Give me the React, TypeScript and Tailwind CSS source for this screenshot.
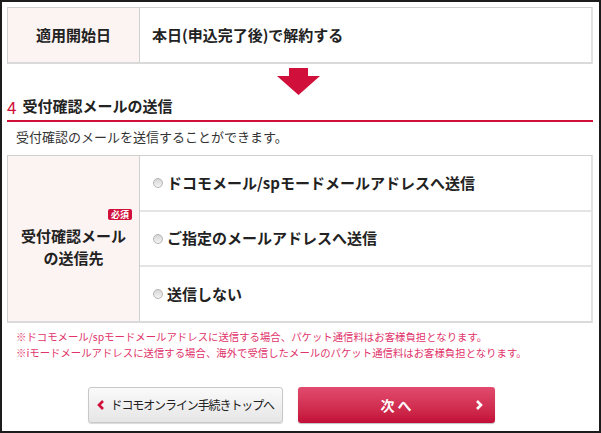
const font = "font-['Meiryo','Noto_Sans_CJK_JP',sans-serif]"

function Radio() {
  return (
    <span className="inline-block w-[10px] h-[10px] rounded-full border border-[#b5b5b5] bg-gradient-to-b from-[#d6d6d6] to-[#f4f4f4] mr-[4px] shrink-0" />
  )
}

const options = [
  'ドコモメール/spモードメールアドレスへ送信',
  'ご指定のメールアドレスへ送信',
  '送信しない',
]

export default function App() {
  return (
    <div className={`w-[601px] h-[433px] border-2 border-[#1c1c1c] bg-white pl-[5px] pr-[6px] pt-[5px] overflow-hidden text-[#222] ${font}`}>
      {/* 適用開始日 */}
      <div className="flex h-[57px] border border-[#d0d0d0] border-r-2 border-b-2 border-r-[#e2e2e2] border-b-[#dadada]">
        <div className="w-[132px] shrink-0 bg-[#fcf4f2] border-r border-[#d0d0d0] flex items-center justify-center text-[15px] font-bold">
          適用開始日
        </div>
        <div className="flex items-center pl-[12px] text-[15px] font-bold">本日(申込完了後)で解約する</div>
      </div>

      {/* arrow */}
      <div className="flex justify-center pt-[4px] h-[31px]">
        <svg width="44" height="27" viewBox="0 0 44 27" className="-translate-x-[1px]">
          <polygon points="12,0 31,0 31,8 43,8 21.5,27 0,8 12,8" fill="#d0103a" />
        </svg>
      </div>

      {/* heading */}
      <div className="flex items-center h-[22px] border-b-2 border-[#d0103a] pb-[3px] box-content">
        <span className="text-[#d0103a] text-[17px] leading-none mr-[6px]">4</span>
        <span className="text-[15px] font-bold">受付確認メールの送信</span>
      </div>

      <p className="text-[13px] text-[#333] pl-[9px] mt-[6px] leading-[18px]">受付確認のメールを送信することができます。</p>

      {/* 受付確認メールの送信先 */}
      <div className="flex mt-[9px] h-[168px] border border-[#d0d0d0] border-r-2 border-b-2 border-r-[#e2e2e2] border-b-[#dadada]">
        <div className="w-[132px] shrink-0 bg-[#fcf4f2] border-r border-[#d0d0d0] flex flex-col items-center justify-center">
          <span className="self-end mr-[7px] bg-[#d0103a] text-white text-[9px] font-bold leading-[11px] px-[3px] rounded-[2px]">必須</span>
          <div className="text-[15px] font-bold leading-[22px] text-center mt-[5px]">
            <p>受付確認メール</p>
            <p>の送信先</p>
          </div>
        </div>
        <div className="flex-1 flex flex-col">
          {options.map((o, i) => (
            <div
              key={o}
              className={`flex-1 flex items-center pl-[13px] text-[15px] font-bold ${i > 0 ? 'border-t-2 border-[#e4e4e4]' : ''}`}
            >
              <Radio />
              {o}
            </div>
          ))}
        </div>
      </div>

      {/* notes */}
      <div className="pl-[9px] mt-[6px] text-[10.4px] leading-[16px] text-[#e0336a]">
        <p>※ドコモメール/spモードメールアドレスに送信する場合、パケット通信料はお客様負担となります。</p>
        <p>※iモードメールアドレスに送信する場合、海外で受信したメールのパケット通信料はお客様負担となります。</p>
      </div>

      {/* buttons */}
      <div className="flex justify-center gap-[15px] mt-[26px] pr-[18px]">
        <button className="w-[195px] h-[36px] rounded-[3px] border border-[#c8c8c8] bg-gradient-to-b from-[#fafafa] to-[#e6e6e6] shadow-[0_1px_1px_rgba(0,0,0,0.15)] flex items-center pl-[8px] text-[12px] tracking-[-1.1px] whitespace-nowrap text-[#222]">
          <svg width="8" height="10" viewBox="0 0 8 10" className="mr-[6px] shrink-0">
            <polyline points="6,1 2,5 6,9" fill="none" stroke="#d0103a" strokeWidth="2.6" />
          </svg>
          ドコモオンライン手続きトップへ
        </button>
        <button className="relative w-[197px] h-[36px] rounded-[3px] bg-gradient-to-b from-[#e24a6e] to-[#c30b38] shadow-[0_1px_1px_rgba(0,0,0,0.25)] flex items-center justify-center text-white text-[14px] font-bold whitespace-pre">
          {'次 へ'}
          <svg width="8" height="10" viewBox="0 0 8 10" className="absolute right-[12px] top-[13px]">
            <polyline points="2,1 6,5 2,9" fill="none" stroke="#fff" strokeWidth="2.6" />
          </svg>
        </button>
      </div>
    </div>
  )
}
